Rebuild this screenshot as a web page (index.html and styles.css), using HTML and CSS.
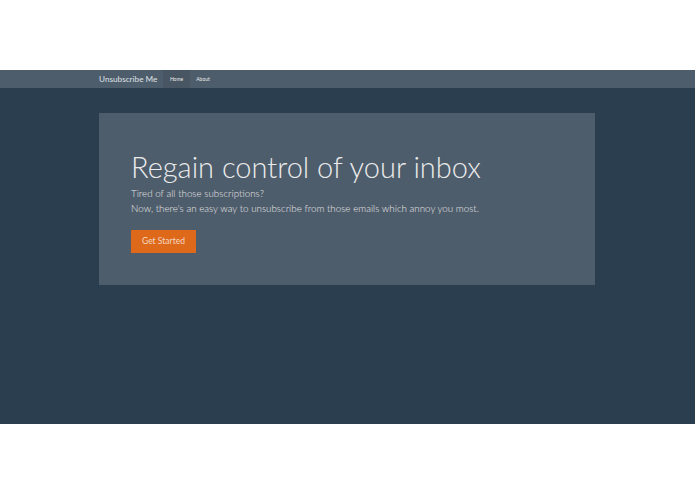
FILE: index.html
```html
<!DOCTYPE html>
<html>
<head>
<meta charset="utf-8">
<link rel="stylesheet" href="styles.css">
</head>
<body>
<div class="top-space"></div>
<div class="app">
  <nav class="navbar">
    <div class="container nav-inner">
      <span class="brand">Unsubscribe Me</span>
      <a class="nav-link active">Home</a>
      <a class="nav-link">About</a>
    </div>
  </nav>
  <div class="container">
    <section class="jumbotron">
      <h1>Regain control of your inbox</h1>
      <p class="lead">Tired of all those subscriptions?<br>Now, there's an easy way to unsubscribe from those emails which annoy you most.</p>
      <a class="btn">Get Started</a>
    </section>
  </div>
</div>
</body>
</html>
```
FILE: styles.css
```css
html, body {
  margin: 0;
  padding: 0;
  background: #ffffff;
  font-family: Lato, "Open Sans", sans-serif;
}
.top-space {
  height: 70px;
}
.app {
  height: 354px;
  background: #2b3e50;
}
.navbar {
  height: 18px;
  background: #4e5d6c;
}
.container {
  width: 496px;
  margin: 0 0 0 99px;
}
.nav-inner {
  display: flex;
  align-items: stretch;
  height: 18px;
}
.brand {
  color: #dfe2e5;
  font-size: 8.2px;
  line-height: 18px;
  margin-right: 6px;
  white-space: nowrap;
}
.nav-link {
  color: #ebebeb;
  font-size: 5px;
  line-height: 18px;
  padding: 0 6.5px;
}
.nav-link.active {
  background: #485563;
}
.jumbotron {
  margin-top: 25px;
  background: #4e5d6c;
  height: 172px;
  padding: 0 32px;
  box-sizing: border-box;
  padding-top: 37px;
}
.jumbotron h1 {
  margin: 0;
  color: #ebebeb;
  font-weight: 300;
  font-size: 29px;
  line-height: 34px;
}
.jumbotron .lead {
  margin: 2px 0 12px 0;
  color: #e6e6e6;
  font-size: 9.8px;
  font-weight: 300;
  line-height: 15px;
}
.btn {
  display: inline-block;
  background: #df691a;
  color: #f2d8c4;
  font-size: 8.5px;
  line-height: 23px;
  padding: 0 11px;
}
```
